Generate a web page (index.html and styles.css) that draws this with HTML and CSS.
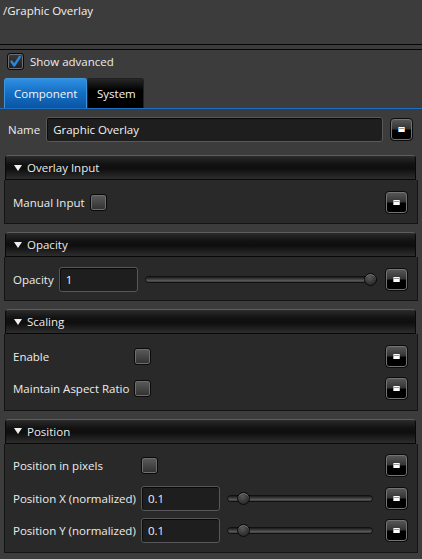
FILE: index.html
```html
<!DOCTYPE html>
<html>
<head>
<meta charset="utf-8">
<link rel="stylesheet" href="styles.css">
</head>
<body>
<div class="title">/Graphic Overlay</div>
<div class="sep"></div>
<div class="adv">
  <span class="check checked"><svg viewBox="0 0 15 15" width="15" height="15"><path d="M3.5 7.5 L6.2 11.5 L11.8 2.8" fill="none" stroke="#2a86dc" stroke-width="2.4" stroke-linecap="round" stroke-linejoin="round"/></svg></span>
  <span class="adv-label">Show advanced</span>
</div>
<div class="tabs">
  <div class="tab active">Component</div>
  <div class="tab">System</div>
</div>
<div class="name-row">
  <span class="label">Name</span>
  <div class="field name-field">Graphic Overlay</div>
  <button class="btn"><span class="ico"></span></button>
</div>

<div class="section">
  <div class="head"><span class="tri"></span>Overlay Input</div>
  <div class="body">
    <span class="label">Manual Input</span>
    <div class="ctl"><span class="check"></span></div>
    <button class="btn"><span class="ico"></span></button>
  </div>
</div>

<div class="section">
  <div class="head"><span class="tri"></span>Opacity</div>
  <div class="body">
    <span class="label">Opacity</span>
    <div class="ctl">
      <div class="field num">1</div>
      <div class="slider opa"><div class="track"></div><div class="thumb" style="left: calc(100% - 13px)"></div></div>
    </div>
    <button class="btn"><span class="ico"></span></button>
  </div>
</div>

<div class="section">
  <div class="head"><span class="tri"></span>Scaling</div>
  <div class="body">
    <span class="label">Enable</span>
    <div class="ctl"><span class="check"></span></div>
    <button class="btn"><span class="ico"></span></button>
    <span class="label">Maintain Aspect Ratio</span>
    <div class="ctl"><span class="check"></span></div>
    <button class="btn"><span class="ico"></span></button>
  </div>
</div>

<div class="section">
  <div class="head"><span class="tri"></span>Position</div>
  <div class="body">
    <span class="label">Position in pixels</span>
    <div class="ctl"><span class="check"></span></div>
    <button class="btn"><span class="ico"></span></button>
    <span class="label">Position X (normalized)</span>
    <div class="ctl">
      <div class="field num">0.1</div>
      <div class="slider"><div class="track"></div><div class="thumb" style="left: 7%"></div></div>
    </div>
    <button class="btn"><span class="ico"></span></button>
    <span class="label">Position Y (normalized)</span>
    <div class="ctl">
      <div class="field num">0.1</div>
      <div class="slider"><div class="track"></div><div class="thumb" style="left: 7%"></div></div>
    </div>
    <button class="btn"><span class="ico"></span></button>
  </div>
</div>
</body>
</html>
```

FILE: styles.css
```css
* { box-sizing: border-box; }
html, body { margin: 0; padding: 0; }
body {
  width: 422px;
  height: 559px;
  overflow: hidden;
  background: #3c3c3c;
  color: #ececec;
  font-family: "Open Sans", "Noto Sans", sans-serif;
  font-size: 11.5px;
}
.title {
  height: 45px;
  padding: 3px 3px 0;
  border-bottom: 1px solid #050505;
  color: #f2f2f2;
}
.sep {
  height: 5px;
  border-bottom: 1px solid #050505;
}
.adv {
  display: flex;
  align-items: center;
  gap: 6px;
  padding: 2px 7px 0;
  height: 20px;
}
.check {
  display: inline-flex;
  align-items: center;
  justify-content: center;
  width: 17px;
  height: 17px;
  border: 1px solid #0a0a0a;
  border-radius: 3px;
  box-shadow: inset 0 0 0 1px #6e6e6e;
  background: linear-gradient(#5c5c5c, #303030);
}
.check.checked {
  background: linear-gradient(#3a3a3a, #1e1e1e);
}
.adv-label { color: #ececec; }
.tabs {
  display: flex;
  margin-top: 8px;
  padding-left: 4px;
  border-bottom: 1px solid #1b6fc4;
  height: 31px;
}
.tab {
  height: 30px;
  display: flex;
  align-items: center;
  color: #f4f4f4;
  border-radius: 3px 3px 0 0;
  background: linear-gradient(#262626, #000 40%, #000);
  border: 1px solid #202020;
  border-bottom: none;
}
.tab.active {
  padding: 0 0 0 9px;
  width: 83px;
  background: linear-gradient(#2f8fe3, #1570c6 45%, #0b55a3);
  border-color: #3d95dd;
}
.tab:not(.active) { width: 57px; padding-left: 9px; }
.name-row {
  display: flex;
  align-items: center;
  padding: 0 9px 0 8px;
  margin-top: 8px;
  height: 25px;
}
.name-row .label { margin-right: 6px; }
.field {
  height: 25px;
  display: flex;
  align-items: center;
  padding: 0 6px;
  background: #1e1e1e;
  border: 1px solid #585858;
  border-radius: 3px;
  box-shadow: inset 0 1px 0 #080808, inset 1px 0 0 #0c0c0c;
  color: #f2f2f2;
}
.name-field { flex: 1; margin-right: 7px; }
.btn {
  width: 23px;
  height: 23px;
  padding: 0;
  border: 1px solid #0c0c0c;
  border-radius: 4px;
  background: linear-gradient(#5a5a5a, #333 48%, #000 52%, #000);
  box-shadow: inset 0 0 0 1px #747474;
  display: flex;
  align-items: center;
  justify-content: center;
}
.ico {
  display: block;
  width: 7px;
  height: 5px;
  background: linear-gradient(#fff 0, #fff 1px, #9a9a9a 1px, #9a9a9a 2px, #fff 2px);
  border-left: 1px solid #6ab4ff;
  border-right: 1px solid #ffb060;
}
.section {
  margin: 13px 4px 0 4px;
}
.section + .section { margin-top: 8px; }
.head {
  height: 25px;
  margin: 0 2px 0 1px;
  display: flex;
  align-items: center;
  padding-left: 8px;
  border: 1px solid #080808;
  border-top-color: #5e5e5e;
  border-radius: 4px 4px 0 0;
  background: linear-gradient(#2b2b2b, #121212 35%, #0e0e0e 55%, #2d2d2d);
  color: #ececec;
}
.tri {
  width: 0;
  height: 0;
  border-left: 4px solid transparent;
  border-right: 4px solid transparent;
  border-top: 6px solid #efefef;
  margin-right: 5px;
}
.body {
  display: grid;
  grid-template-columns: max-content 1fr 23px;
  grid-auto-rows: 32.5px;
  column-gap: 5px;
  align-items: center;
  padding: 6px 9px 4.5px 8px;
  background: #292929;
  border: 1px solid #141414;
  border-top: none;
}
.label { color: #ececec; white-space: nowrap; }
.ctl {
  display: flex;
  align-items: center;
}
.num { width: 79px; flex: none; }
.slider {
  position: relative;
  flex: 1;
  height: 13px;
  margin: 0 7px 0 7px;
  display: flex;
  align-items: center;
}
.slider.opa { margin-right: 3px; }
.track {
  width: 100%;
  height: 7px;
  border-radius: 4px;
  background: linear-gradient(#1a1a1a, #3a3a3a 40%, #555 70%, #3c3c3c);
  border: 1px solid #111;
}
.thumb {
  position: absolute;
  top: 0;
  width: 13px;
  height: 13px;
  border-radius: 50%;
  border: 1px solid #0a0a0a;
  background: radial-gradient(circle at 40% 30%, #5a5a5a, #333 60%, #1e1e1e);
  box-shadow: inset 0 1px 0 #777;
}
```
